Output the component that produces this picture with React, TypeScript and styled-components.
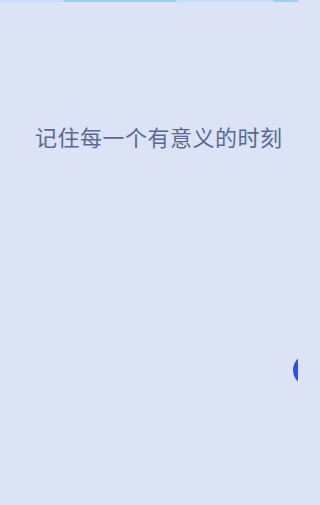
import React from "react";
import styled, { createGlobalStyle } from "styled-components";

const GlobalStyle = createGlobalStyle`
  html, body {
    margin: 0;
    padding: 0;
    background: #dce3f4;
  }
`;

export default function App() {
  return (
    <>
      <GlobalStyle />
      <Page>
        <TopLine />
        <Slogan>记住每一个有意义的时刻</Slogan>
        <FloatButton aria-label="add" />
      </Page>
    </>
  );
}

const Page = styled.div`
  position: relative;
  width: 298px;
  height: 505px;
  overflow: hidden;
  background: #dce3f4;
  display: flex;
  flex-direction: column;
`;

const TopLine = styled.div`
  width: 100%;
  height: 2px;
  background: linear-gradient(
    90deg,
    #cadef8 0%,
    #cadef8 21%,
    #95d3f6 21.5%,
    #95d3f6 59%,
    #c3e0f9 59.5%,
    #c3e0f9 91.5%,
    #95d3f6 92%,
    #95d3f6 100%
  );
`;

const Slogan = styled.h1`
  margin: 120px 0 0 35px;
  font-family: "Noto Sans CJK SC", "Noto Sans", sans-serif;
  font-size: 22px;
  font-weight: 400;
  letter-spacing: 0.5px;
  line-height: 28px;
  white-space: nowrap;
  color: #5a6a94;
`;

// half-hidden round button stuck to the right edge
const FloatButton = styled.div`
  position: absolute;
  left: 293px;
  top: 354px;
  width: 32px;
  height: 32px;
  border-radius: 50%;
  background: #2e4ff0;
`;
